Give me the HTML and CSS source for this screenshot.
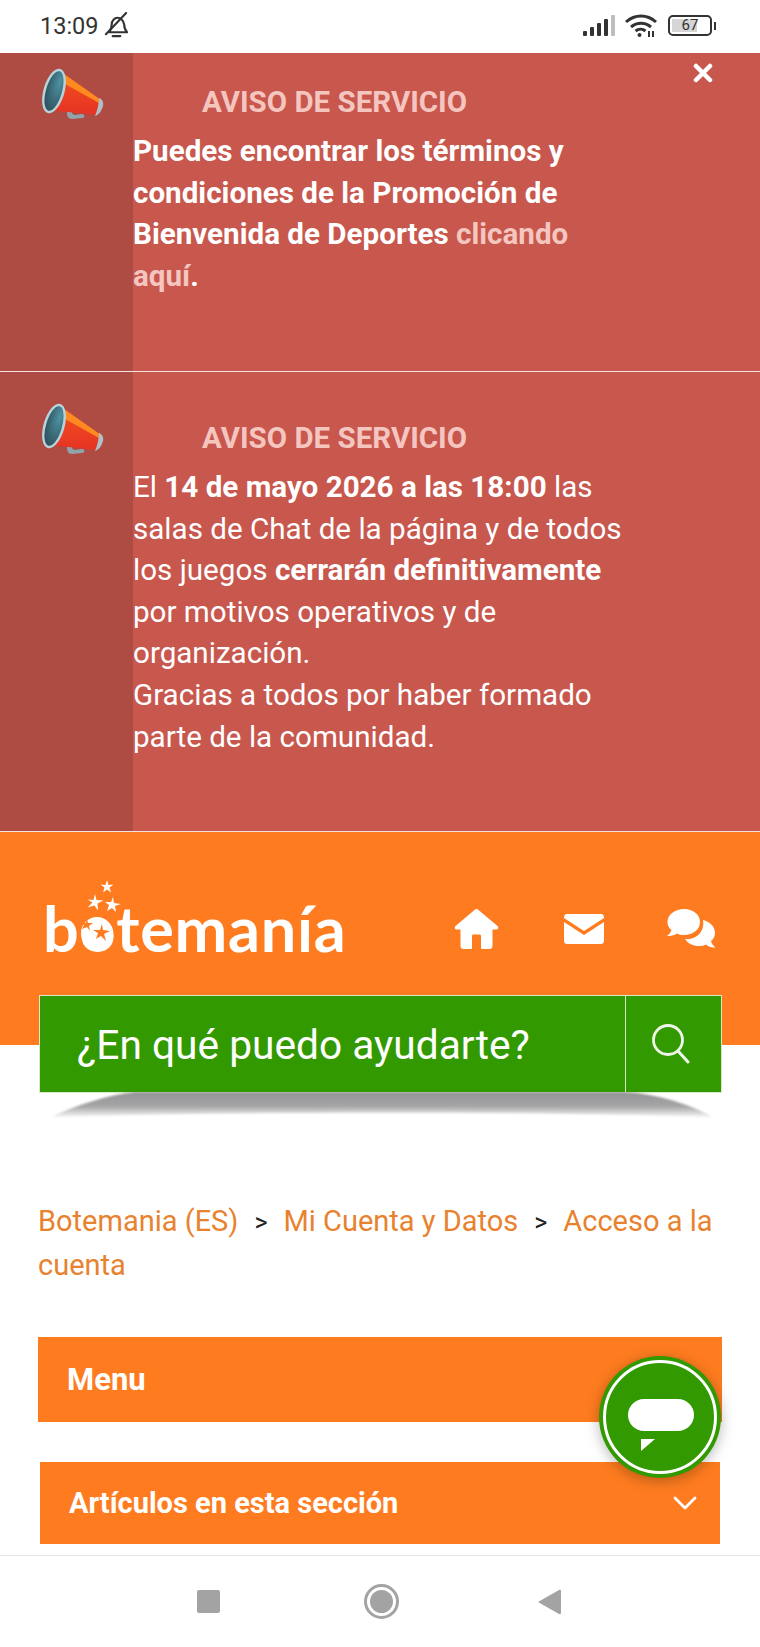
FILE: index.html
```
<!DOCTYPE html>
<html lang="es">
<head>
<meta charset="utf-8">
<title>Botemania</title>
<link rel="stylesheet" href="styles.css">
</head>
<body>
<svg class="defs" width="0" height="0" aria-hidden="true">
  <defs>
    <linearGradient id="cone" x1="0" y1="0" x2="0" y2="1"><stop offset="0" stop-color="#f4511e"/><stop offset="1" stop-color="#e53325"/></linearGradient>
    <radialGradient id="mouth" cx=".7" cy=".25" r=".9"><stop offset="0" stop-color="#4f93a3"/><stop offset="1" stop-color="#2b4a55"/></radialGradient>
    <symbol id="megaphone" viewBox="0 0 64 54">
      <path d="M26 44c0 4 1 7 5 7l10-1c3 0 3-4 0-4l-7 1c-2 0-3-1-3-3z" fill="#90a4ae"/>
      <path d="M20 4 L60 32 L54 47 L9 42 Z" fill="url(#cone)"/>
      <path d="M23 6 L60 32 L58 35 L24 16 Z" fill="#ff8a1f"/>
      <path d="M58 30c3 1 5 4 4 8s-4 9-8 10c2-5 4-12 4-18z" fill="#b0bec5"/>
      <ellipse cx="13" cy="23" rx="10.500" ry="23" transform="rotate(16 13 23)" fill="#b7d3dc"/>
      <ellipse cx="13" cy="23" rx="8" ry="20.500" transform="rotate(16 13 23)" fill="url(#mouth)"/>
    </symbol>
  </defs>
</svg>

<header class="status">
  <div class="status-left">
    <span class="time">13:09</span>
    <svg class="bell" viewBox="0 0 26 28" aria-hidden="true">
      <path d="M5 21c2-2 3-4 3-8 0-4 3-7 6-7 4 0 6 3 7 7 0 3 1 6 3 8z" fill="none" stroke="#333" stroke-width="2.200" stroke-linejoin="round"/>
      <path d="M9 25h8" stroke="#333" stroke-width="2.200" stroke-linecap="round"/>
      <path d="M2 23 23 1" stroke="#333" stroke-width="2.200" stroke-linecap="round"/>
    </svg>
  </div>
  <div class="status-right">
    <svg class="signal" viewBox="0 0 32 21" aria-hidden="true">
      <rect x="0" y="16" width="4" height="5" rx="1" fill="#333"/>
      <rect x="7" y="12" width="4" height="9" rx="1" fill="#333"/>
      <rect x="14" y="8" width="4" height="13" rx="1" fill="#333"/>
      <rect x="21" y="4" width="4" height="17" rx="1" fill="#333"/>
      <rect x="28" y="0" width="4" height="21" rx="1" fill="#bdbdbd"/>
    </svg>
    <svg class="wifi" viewBox="0 0 32 23" aria-hidden="true">
      <path d="M1 8c9-8 21-8 30 0M6 13c6-5 14-5 20 0M10.500 17c3-2.500 7-2.500 10 0" fill="none" stroke="#333" stroke-width="3"/>
      <circle cx="14.500" cy="21" r="2" fill="#333"/>
      <path d="M24 17v6M28 17v6" stroke="#333" stroke-width="2"/>
    </svg>
    <div class="battery"><span class="battery-fill"></span><span class="battery-num">67</span></div>
    <span class="battery-nub"></span>
  </div>
</header>

<section class="notice notice-first">
  <div class="notice-side"><svg class="mega" aria-hidden="true"><use href="#megaphone"/></svg></div>
  <div class="notice-body">
    <h2 class="notice-title">AVISO DE SERVICIO</h2>
    <p class="notice-text"><b>Puedes encontrar los términos y condiciones de la Promoción de Bienvenida de Deportes <span class="notice-link">clicando aquí</span>.</b></p>
  </div>
  <svg class="close" viewBox="0 0 20 20" aria-label="Cerrar"><path d="M3 3 17 17M17 3 3 17" stroke="#fff" stroke-width="4.500" stroke-linecap="round"/></svg>
</section>

<section class="notice notice-second">
  <div class="notice-side"><svg class="mega" aria-hidden="true"><use href="#megaphone"/></svg></div>
  <div class="notice-body">
    <h2 class="notice-title">AVISO DE SERVICIO</h2>
    <p class="notice-text">El <b>14 de mayo 2026 a las 18:00</b> las salas de Chat de la página y de todos los juegos <b>cerrarán definitivamente</b> por motivos operativos y de organización.<br>Gracias a todos por haber formado parte de la comunidad.</p>
  </div>
</section>

<div class="top">
  <div class="brand-row">
    <div class="logo" aria-label="botemanía">
      <svg class="logo-stars" viewBox="0 0 40 44" aria-hidden="true">
        <path d="M24 0l1.500 5 5-.5-4 3 1.500 5-4-3-4 3 1.500-5-4-3 5 .5z" fill="#fff"/>
        <path d="M12 14l1.500 6 7 .5-6 3 .5 7-3.500-5-7 2 5-5-5-3 6 .5z" fill="#fff"/>
        <path d="M30 17l1 6 7 1-6 2 1 6-4-4-5 3 2-6-4-3 6 0z" fill="#fff"/>
      </svg>
      <span class="logo-word">b<span class="logo-ball">o<svg class="logo-ball-art" viewBox="0 0 32 32" aria-hidden="true"><circle cx="16" cy="16" r="16" fill="#fff"/><path d="M21 7l1 6 7 1-6 3 2 7-5-5-5 3 2-6-5-3 7 0z" fill="#fe7c1f"/><path d="M6 2l1 4 5 0-4 3 1 5-3-4-5 2 2-4-2-3 4 1z" fill="#fe7c1f"/></svg></span>temanía</span>
    </div>
    <nav class="top-icons">
      <svg class="ico-home" viewBox="0 0 44 40" aria-label="Inicio"><path d="M22 0c1 0 1.500.5 2 1l19 16c1.500 1.500.5 3.500-1 3.500h-4V37c0 1.700-1.300 3-3 3h-7c-1 0-1.500-.5-1.500-1.500V27c0-1-.5-1.500-1.500-1.500h-6c-1 0-1.500.5-1.500 1.500v11.500c0 1-.5 1.500-1.500 1.500H9c-1.700 0-3-1.300-3-3V20.500H2c-1.500 0-2.500-2-1-3.500L20 1c.5-.5 1-1 2-1z" fill="#fff"/></svg>
      <svg class="ico-mail" viewBox="0 0 40 30" aria-label="Correo"><path d="M3 0h34c1.500 0 3 1.300 3 3v1L20 17 0 4V3c0-1.700 1.500-3 3-3z" fill="#fff"/><path d="M0 8 20 21 40 8v19c0 1.700-1.500 3-3 3H3c-1.500 0-3-1.300-3-3z" fill="#fff"/></svg>
      <svg class="ico-chat" viewBox="0 0 50 40" aria-label="Chat"><path d="M18 0c9 0 16 5.500 16 13s-7 13-16 13c-3 0-5-.5-7-1.500C8 26.500 5 27 1 27c2.500-2 4-4 4.500-6C3 19 1.500 16.500 1.500 13 1.500 5.500 9 0 18 0z" fill="#fff"/><path d="M37 11c7 2 12 6.500 12 13 0 3.500-1.500 6-4 8 .5 2.500 2 4.500 4.500 6.500-3.500 0-7-.5-9.500-3-2 1-4.500 1.500-7 1.500-6 0-11-2.500-14-7 12 1 20-8 18-19z" fill="#fff"/></svg>
    </nav>
  </div>
  <form class="search">
    <div class="search-field">¿En qué puedo ayudarte?</div>
    <div class="search-btn">
      <svg class="ico-search" viewBox="0 0 38 40" aria-label="Buscar"><circle cx="16" cy="16" r="14.500" fill="none" stroke="#f0f7e9" stroke-width="2.800"/><path d="M26 27 36 38" stroke="#f0f7e9" stroke-width="3" stroke-linecap="round"/></svg>
    </div>
  </form>
</div>
<svg class="search-shadow" viewBox="0 0 682 30" aria-hidden="true">
  <defs>
    <linearGradient id="sh" x1="0" y1="0" x2="0" y2="1"><stop offset="0" stop-color="#949496"/><stop offset=".55" stop-color="#a5a5a7"/><stop offset="1" stop-color="#fff"/></linearGradient>
    <filter id="shb"><feGaussianBlur stdDeviation="1.200"/></filter>
  </defs>
  <path d="M10 26C36 14 66 3 96 0H586C620 2 650 12 676 26 580 19 110 19 10 26Z" fill="url(#sh)" filter="url(#shb)"/>
</svg>

<main class="content">
  <p class="crumbs"><a>Botemania (ES)</a><span class="sep">&gt;</span><a>Mi Cuenta y Datos</a><span class="sep">&gt;</span><a>Acceso a la cuenta</a></p>
  <div class="bar bar-menu">Menu</div>
  <div class="bar bar-articles">
    <span>Artículos en esta sección</span>
    <svg class="chev" viewBox="0 0 24 14" aria-hidden="true"><path d="M2 2l10 10L22 2" fill="none" stroke="#fff" stroke-width="2.800" stroke-linecap="round" stroke-linejoin="round"/></svg>
  </div>
</main>

<div class="chat-fab">
  <div class="chat-ring">
    <span class="chat-pill"></span>
    <svg class="chat-tail" viewBox="0 0 14 14" aria-hidden="true"><path d="M0 14V2h14z" fill="#fff"/></svg>
  </div>
</div>

<footer class="navbar">
  <span class="nav-square"></span>
  <span class="nav-circle"><span class="nav-dot"></span></span>
  <svg class="nav-back" viewBox="0 0 23 26" aria-hidden="true"><path d="M0 13 21 1c1-.5 2 0 2 1v22c0 1-1 1.500-2 1z" fill="#a3a3a3"/></svg>
</footer>
</body>
</html>
```
FILE: styles.css
```
* { box-sizing: border-box; }
html, body { margin: 0; padding: 0; }
body {
  width: 760px;
  height: 1647px;
  overflow: hidden;
  position: relative;
  background: #fff;
  font-family: Roboto, "Liberation Sans", sans-serif;
  display: flex;
  flex-direction: column;
}
.defs { position: absolute; }

.status {
  height: 53px;
  flex: none;
  display: flex;
  justify-content: space-between;
  align-items: center;
  padding: 0 44px 2px 40px;
  color: #333;
}
.status-left { display: flex; align-items: center; gap: 5px; }
.time { font-size: 23.500px; line-height: 26px; }
.bell { width: 25px; height: 27px; }
.status-right { display: flex; align-items: center; }
.signal { width: 32px; height: 21px; margin-right: 10px; }
.wifi { width: 32px; height: 23px; margin-right: 11px; }
.battery {
  width: 44px;
  height: 21px;
  border: 2px solid #333;
  border-radius: 5px;
  position: relative;
  padding: 2px;
  display: flex;
}
.battery-fill { width: 25px; background: #d6d6d6; }
.battery-num {
  position: absolute;
  left: 0; right: 0; top: 0;
  text-align: center;
  font-size: 15px;
  line-height: 17px;
  color: #333;
}
.battery-nub { width: 2px; height: 8px; background: #333; margin-left: 2px; }

.notice {
  flex: none;
  display: grid;
  grid-template-columns: 133px 1fr;
  background: #c8574d;
  border-bottom: 1px solid #f6e3e0;
  position: relative;
}
.notice-first { height: 319px; }
.notice-second { height: 460px; }
.notice-side { background: #ae4c43; }
.notice-second .notice-side { padding-top: 16px; }
.notice-second .notice-body { padding-top: 13px; }
.mega { display: block; width: 64px; height: 54px; margin: 15px 0 0 41px; }
.notice-title {
  margin: 29px 0 8px 69px;
  font-size: 29.500px;
  line-height: 41px;
  font-weight: 700;
  color: #f5c6c0;
}
.notice-second .notice-title { margin-top: 33px; }
.notice-text {
  margin: 0;
  width: 495px;
  font-size: 29.600px;
  line-height: 41.600px;
  color: #fff;
}
.notice-link { color: #f5c6c0; }
.close { position: absolute; top: 10px; right: 47px; width: 20px; height: 20px; }

.top {
  flex: none;
  height: 261px;
  background: linear-gradient(#fe7c1f 213px, #fff 213px);
  padding: 0 38px 0 39px;
}
.brand-row {
  height: 163px;
  display: flex;
  justify-content: space-between;
  align-items: flex-start;
}
.logo { position: relative; width: 304px; height: 100px; margin: 38px 0 0 4px; }
.logo-stars { position: absolute; left: 40px; top: 10px; width: 40px; height: 44px; }
.logo-word {
  position: absolute;
  left: 0;
  top: 13px;
  font-family: Lato, sans-serif;
  font-weight: 700;
  font-size: 63px;
  line-height: 90px;
  letter-spacing: 0.700px;
  color: #fff;
  white-space: nowrap;
}
.logo-ball { position: relative; display: inline-block; color: #fff; }
.logo-ball-art { position: absolute; left: 2px; top: 34px; width: 32px; height: 32px; }
.top-icons { display: flex; align-items: center; margin: 77px 6px 0 0; }
.ico-home { width: 45px; height: 40px; margin-right: 65px; }
.ico-mail { width: 40px; height: 30px; margin-right: 62px; }
.ico-chat { width: 50px; height: 40px; }

.search {
  height: 98px;
  display: flex;
  background: #339900;
  border: 1px solid #d8e9c8;
}
.search-field {
  flex: 1;
  font-size: 40.700px;
  line-height: 98px;
  padding-left: 37px;
  color: #fff;
  white-space: nowrap;
}
.search-btn {
  width: 96px;
  border-left: 1.500px solid #d8e9c8;
  display: flex;
  align-items: center;
  justify-content: center;
}
.ico-search { width: 38px; height: 40px; margin-right: 6px; }
.search-shadow { display: block; flex: none; width: 682px; height: 30px; margin: -1px 0 0 39px; }

.content { flex: 1; padding: 0 38px; }
.crumbs {
  margin: 78px 0 0;
  font-size: 29px;
  line-height: 43px;
  color: #e8822e;
}
.crumbs a { color: #e8822e; }
.sep { color: #222; margin: 0 16px; font-size: 25px; }
.bar {
  color: #fff;
  font-weight: 700;
  background: #fe7c1f;
  display: flex;
  align-items: center;
}
.bar-menu { height: 85px; margin-top: 50px; padding-left: 29px; font-size: 31px; }
.bar-articles {
  height: 82px;
  margin: 40px 2px 0;
  padding: 0 23px 0 29px;
  font-size: 29px;
  justify-content: space-between;
}
.chev { width: 24px; height: 14px; }

.chat-fab {
  position: absolute;
  left: 599px;
  top: 1356px;
  width: 122px;
  height: 122px;
  border-radius: 50%;
  background: #339900;
  box-shadow: 0 3px 14px rgba(0,0,0,.28);
  padding: 4px;
}
.chat-ring {
  position: relative;
  width: 114px;
  height: 114px;
  border-radius: 50%;
  border: 3px solid #fff;
  background: #339900;
}
.chat-pill {
  position: absolute;
  left: 22px;
  top: 36px;
  width: 66px;
  height: 32px;
  border-radius: 16px;
  background: #fff;
}
.chat-tail { position: absolute; left: 35px; top: 74px; width: 14px; height: 14px; }

.navbar {
  flex: none;
  height: 92px;
  border-top: 1px solid #e4e4e4;
  display: flex;
  align-items: center;
  padding: 0 199px 0 197px;
  justify-content: space-between;
  background: #fff;
}
.nav-square { width: 23px; height: 23px; border-radius: 2px; background: #a3a3a3; }
.nav-circle {
  width: 35px;
  height: 35px;
  margin-left: 4px;
  border-radius: 50%;
  border: 3px solid #a3a3a3;
  display: flex;
  align-items: center;
  justify-content: center;
}
.nav-dot { width: 23px; height: 23px; border-radius: 50%; background: #a3a3a3; }
.nav-back { width: 23px; height: 26px; }
```
